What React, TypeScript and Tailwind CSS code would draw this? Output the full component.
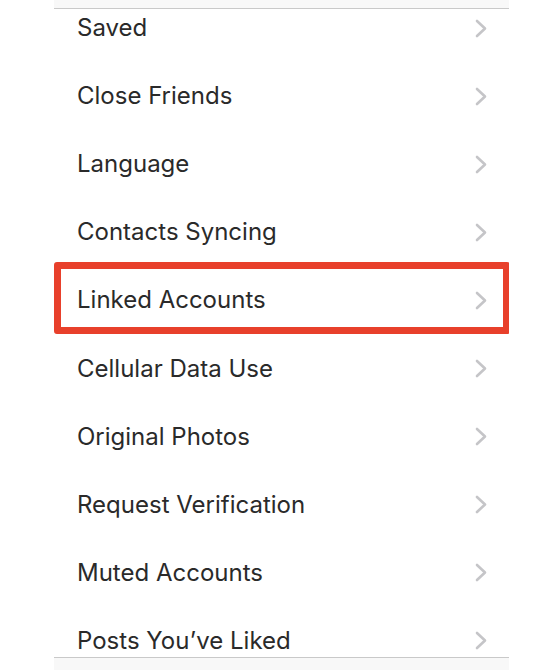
const items = [
  "Saved",
  "Close Friends",
  "Language",
  "Contacts Syncing",
  "Linked Accounts",
  "Cellular Data Use",
  "Original Photos",
  "Request Verification",
  "Muted Accounts",
  "Posts You’ve Liked",
];

function Chevron() {
  return (
    <svg width="12" height="19" viewBox="0 0 12 19" fill="none" className="shrink-0">
      <polyline
        points="2,2 10,9.5 2,17"
        stroke="#c5c5c8"
        strokeWidth="2.6"
        strokeLinecap="round"
        strokeLinejoin="round"
      />
    </svg>
  );
}

export default function App() {
  return (
    <div className="w-[560px] h-[670px] bg-white overflow-hidden font-['Inter',sans-serif]">
      <div className="ml-[54px] w-[455px] h-full flex flex-col">
        {/* nav bar bottom edge */}
        <div className="h-[9px] shrink-0 bg-[#f8f8f8] border-b border-[#c9c9c9]" />

        <div className="flex-1 overflow-hidden">
          <div className="-mt-[15px]">
            {items.map((label) => (
              <div key={label} className="relative h-[68.1px] flex items-center justify-between pl-[23px] pr-[22px]">
                <span className="text-[24px] text-[#2a2a2a] tracking-[0px]">{label}</span>
                <Chevron />
                {label === "Linked Accounts" && (
                  <div className="absolute left-0 -right-[1px] -top-[4px] h-[72px] border-[7px] border-[#e8402b] rounded-[3px] pointer-events-none" />
                )}
              </div>
            ))}
          </div>
        </div>

        {/* tab bar top edge */}
        <div className="h-[13px] shrink-0 bg-[#f8f8f8] border-t border-[#c9c9c9]" />
      </div>
    </div>
  );
}
